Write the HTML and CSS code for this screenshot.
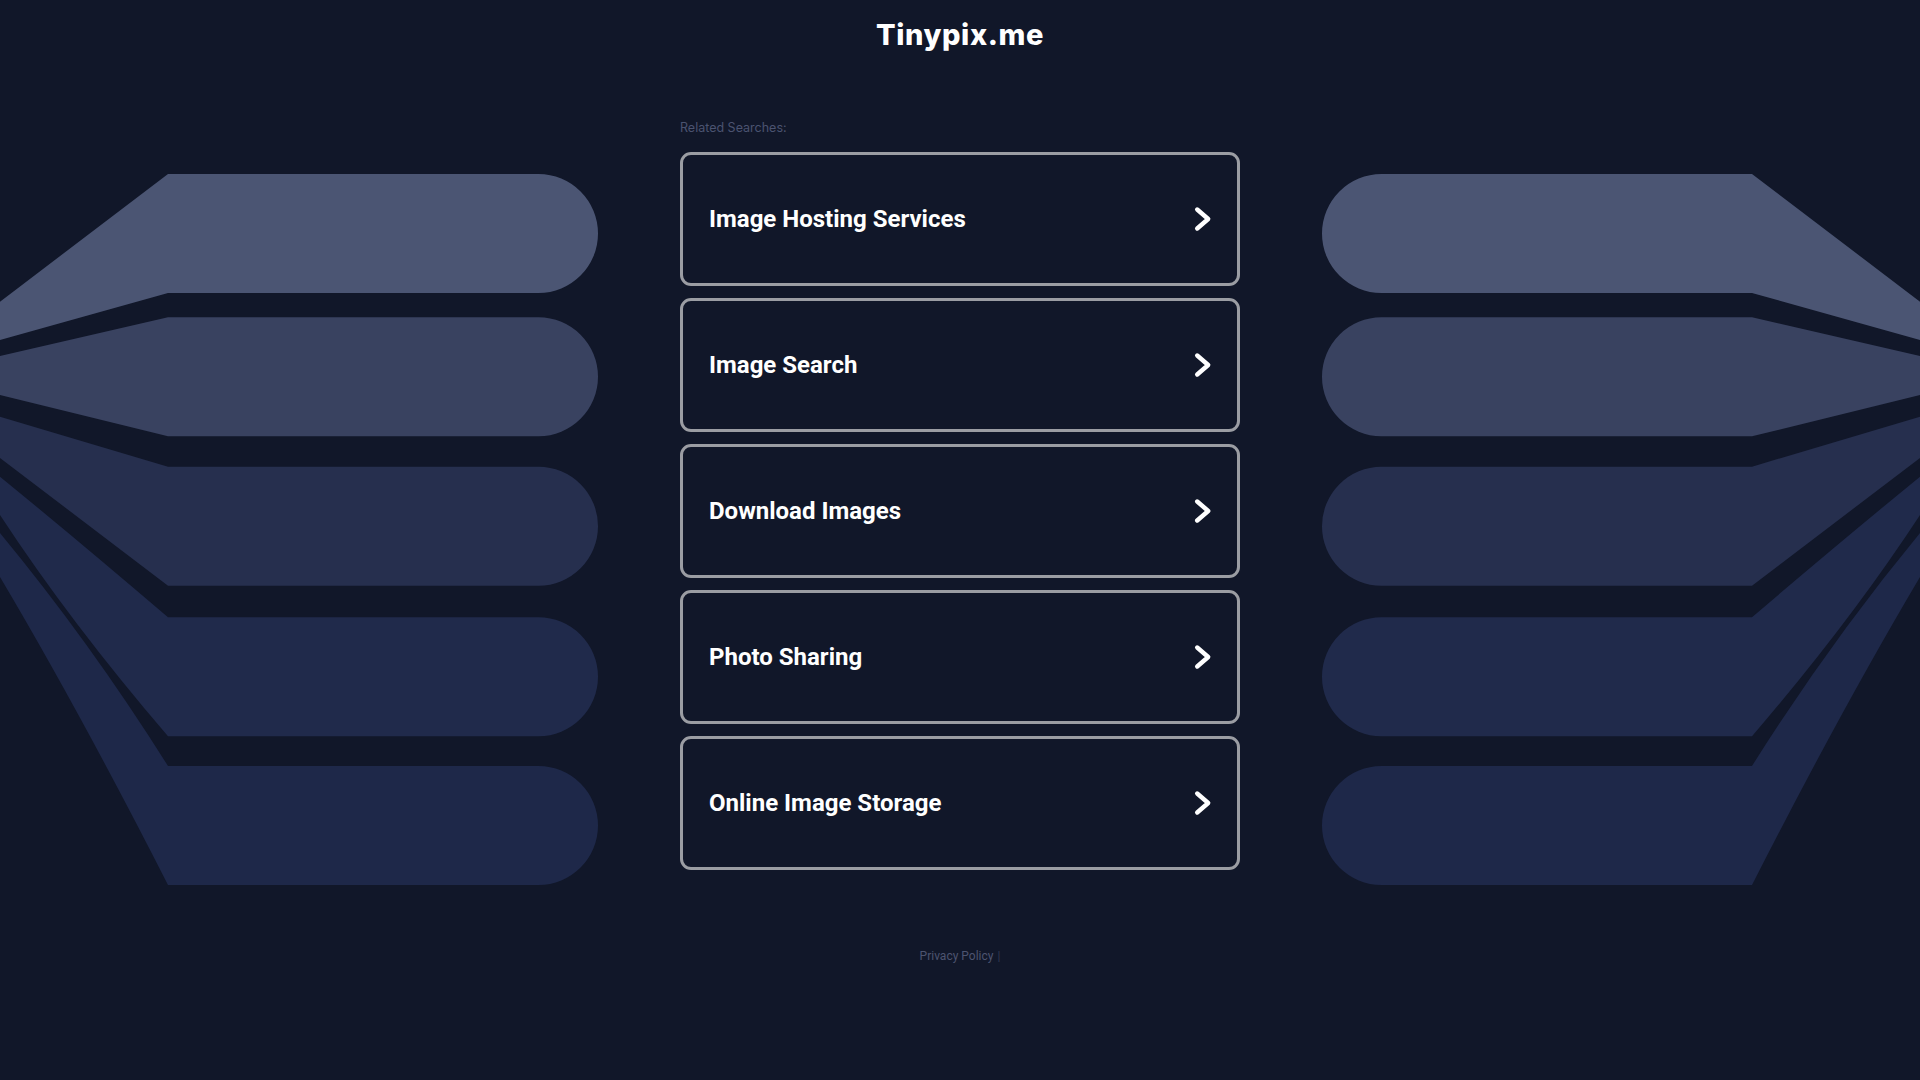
FILE: index.html
```html
<!DOCTYPE html>
<html lang="en">
<head>
<meta charset="utf-8">
<title>Tinypix.me</title>
<link rel="stylesheet" href="styles.css">
</head>
<body>
<header class="site-header">
  <h1 class="site-title">Tinypix.me</h1>
</header>

<main class="stage">
  <p class="related-label">Related Searches:</p>

  <svg class="deco deco-left" viewBox="0 0 600 740" aria-hidden="true">
    <path class="b1" d="M168 22 H538.5 A59.5 59.5 0 0 1 538.5 141 H168 L0 188 L0 149.7 Z"/>
    <path class="b2" d="M168 165.3 H538.5 A59.5 59.5 0 0 1 538.5 284.3 H168 L0 243 L0 204 Z"/>
    <path class="b3" d="M168 314.7 H538.5 A59.5 59.5 0 0 1 538.5 433.7 H168 L0 306 L0 264.7 Z"/>
    <path class="b4" d="M168 465.3 H538.5 A59.5 59.5 0 0 1 538.5 584.3 H168 Q70 470 0 363 L0 324.7 Q80 390 168 465.3 Z"/>
    <path class="b5" d="M168 614 H538.5 A59.5 59.5 0 0 1 538.5 733 H168 Q80 560 0 425 L0 381 Q90 490 168 614 Z"/>
  </svg>

  <ul class="search-list">
    <li><a class="search-item" href="#"><span>Image Hosting Services</span><svg class="chev" viewBox="0 0 18 26"><polyline points="3.2,3.5 14.2,13 3.2,22.5"/></svg></a></li>
    <li><a class="search-item" href="#"><span>Image Search</span><svg class="chev" viewBox="0 0 18 26"><polyline points="3.2,3.5 14.2,13 3.2,22.5"/></svg></a></li>
    <li><a class="search-item" href="#"><span>Download Images</span><svg class="chev" viewBox="0 0 18 26"><polyline points="3.2,3.5 14.2,13 3.2,22.5"/></svg></a></li>
    <li><a class="search-item" href="#"><span>Photo Sharing</span><svg class="chev" viewBox="0 0 18 26"><polyline points="3.2,3.5 14.2,13 3.2,22.5"/></svg></a></li>
    <li><a class="search-item" href="#"><span>Online Image Storage</span><svg class="chev" viewBox="0 0 18 26"><polyline points="3.2,3.5 14.2,13 3.2,22.5"/></svg></a></li>
  </ul>

  <svg class="deco deco-right" viewBox="0 0 600 740" aria-hidden="true">
    <path class="b1" d="M168 22 H538.5 A59.5 59.5 0 0 1 538.5 141 H168 L0 188 L0 149.7 Z"/>
    <path class="b2" d="M168 165.3 H538.5 A59.5 59.5 0 0 1 538.5 284.3 H168 L0 243 L0 204 Z"/>
    <path class="b3" d="M168 314.7 H538.5 A59.5 59.5 0 0 1 538.5 433.7 H168 L0 306 L0 264.7 Z"/>
    <path class="b4" d="M168 465.3 H538.5 A59.5 59.5 0 0 1 538.5 584.3 H168 Q70 470 0 363 L0 324.7 Q80 390 168 465.3 Z"/>
    <path class="b5" d="M168 614 H538.5 A59.5 59.5 0 0 1 538.5 733 H168 Q80 560 0 425 L0 381 Q90 490 168 614 Z"/>
  </svg>
</main>

<footer class="site-footer">
  <a href="#" class="footer-link">Privacy Policy</a><span class="footer-sep">|</span>
</footer>
</body>
</html>
```

FILE: styles.css
```css
html, body {
  margin: 0;
  padding: 0;
}

body {
  background: #111729;
  min-height: 1080px;
  font-family: Roboto, "Liberation Sans", sans-serif;
  color: #ffffff;
}

.site-header {
  padding-top: 17px;
  text-align: center;
}

.site-title {
  margin: 0;
  font-family: Inter, "Liberation Sans", sans-serif;
  font-weight: 800;
  font-size: 29px;
  line-height: 35px;
  letter-spacing: 0.6px;
  color: #ffffff;
}

.stage {
  display: grid;
  grid-template-columns: 1fr 560px 1fr;
  grid-template-rows: auto auto;
  column-gap: 80px;
  margin-top: 68px;
}

.related-label {
  grid-column: 2;
  grid-row: 1;
  margin: 0 0 17px 0;
  font-family: Inter, "Liberation Sans", sans-serif;
  font-size: 12.5px;
  line-height: 15px;
  color: #4b5370;
}

.deco {
  grid-row: 2;
  display: block;
  width: 600px;
  height: 740px;
}

.deco-left {
  grid-column: 1;
}

.deco-right {
  grid-column: 3;
  transform: scaleX(-1);
}

.b1 { fill: #4b5573; }
.b2 { fill: #394260; }
.b3 { fill: #262f4e; }
.b4 { fill: #202a4b; }
.b5 { fill: #1e2849; }

.search-list {
  grid-column: 2;
  grid-row: 2;
  list-style: none;
  margin: 0;
  padding: 0;
  display: flex;
  flex-direction: column;
  gap: 12px;
  align-self: start;
}

.search-item {
  box-sizing: border-box;
  height: 134px;
  display: flex;
  align-items: center;
  justify-content: space-between;
  padding: 0 25px 0 26px;
  border: 3px solid #9b9da3;
  border-radius: 11px;
  background: #111729;
  color: #ffffff;
  text-decoration: none;
  font-family: Roboto, "Liberation Sans", sans-serif;
  font-weight: 700;
  font-size: 24px;
  line-height: 28px;
}

.chev {
  width: 18px;
  height: 26px;
  flex: none;
}

.chev polyline {
  fill: none;
  stroke: #ffffff;
  stroke-width: 4.4;
  stroke-linecap: round;
  stroke-linejoin: round;
}

.site-footer {
  margin-top: 57px;
  text-align: center;
  font-family: Roboto, "Liberation Sans", sans-serif;
  font-size: 12px;
  line-height: 14px;
}

.footer-link {
  color: #4d5470;
  text-decoration: none;
}

.footer-sep {
  color: #333a52;
  margin-left: 4px;
}
```
